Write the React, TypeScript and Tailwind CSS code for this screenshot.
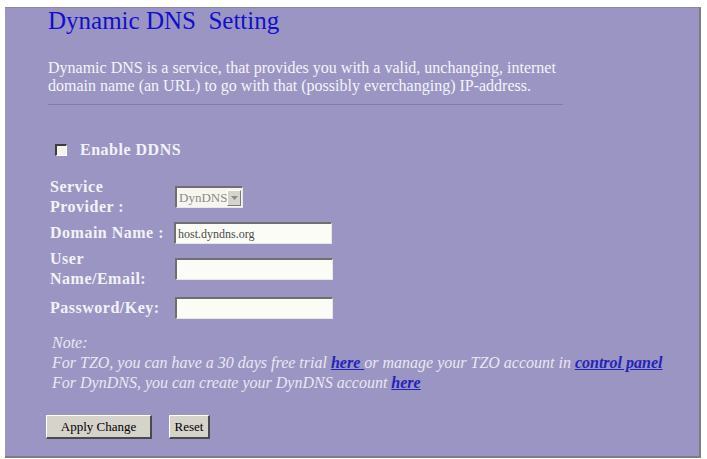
import React from "react";

function TextBox({ value }: { value?: string }) {
  return (
    <div className="w-[158px] h-[22px] bg-[#fcfcf6] border-t-2 border-l-2 border-t-[#6f6f6f] border-l-[#6f6f6f] border-b border-r border-b-[#e8e8e0] border-r-[#e8e8e0] flex items-center pl-[2px] text-[12px] font-normal tracking-normal text-[#4a4a4a] leading-none">
      {value}
    </div>
  );
}

export default function App() {
  return (
    <div className="w-[707px] h-[459px] bg-white overflow-hidden font-['Liberation_Serif','Times_New_Roman',serif]">
      <div className="ml-[5px] mt-[7px] w-[696px] h-[451px] bg-[#9b95c3] border-t border-t-[#8a8a9a] border-r-2 border-b-2 border-r-[#7c7c84] border-b-[#7c7c84]">
        <div className="pl-[43px]">
          <h1 className="text-[25px] leading-[25px] text-[#1010cc] whitespace-pre">Dynamic DNS  Setting</h1>
          <p className="mt-[26px] text-[16px] leading-[18px] text-[#f4f4f8]">
            Dynamic DNS is a service, that provides you with a valid, unchanging, internet
            <br />
            domain name (an URL) to go with that (possibly everchanging) IP-address.
          </p>
          <div className="mt-[9px] w-[515px] border-t border-[#827cab]" />
        </div>

        <div className="pl-[50px] mt-[35px] flex items-center h-[20px]">
          <div className="w-[12px] h-[12px] bg-[#f4f4ec] border-t-2 border-l-2 border-t-[#3c3c3c] border-l-[#3c3c3c] border-b border-r border-b-white border-r-white" />
          <span className="ml-[13px] text-[16px] leading-[20px] font-bold tracking-[0.5px] text-[#f2f2f6]">Enable DDNS</span>
        </div>

        <div className="pl-[45px] mt-[17px] flex flex-col text-[16px] leading-[20px] font-bold tracking-[0.5px] text-[#f2f2f6]">
          <div className="flex items-center h-[40px]">
            <div className="w-[125px]">
              Service
              <br />
              Provider :
            </div>
            <div className="w-[68px] h-[22px] bg-[#f6f6ef] border-t-2 border-l-2 border-t-[#6f6f6f] border-l-[#6f6f6f] border-b border-r border-b-[#e8e8e0] border-r-[#e8e8e0] flex items-center justify-between">
              <span className="pl-[2px] text-[13px] font-normal tracking-normal text-[#8a8a8a] leading-none">DynDNS</span>
              <span className="w-[15px] h-[16px] mr-[1px] bg-[#d6d3cc] border-t border-l border-t-white border-l-white border-b border-r border-b-[#7a7a7a] border-r-[#7a7a7a] flex items-center justify-center">
                <svg width="7" height="4" viewBox="0 0 7 4">
                  <path d="M0 0 L7 0 L3.5 4 Z" fill="#8a8a8a" />
                </svg>
              </span>
            </div>
          </div>
          <div className="flex items-center h-[22px] mt-[5px]">
            <div className="w-[124px]">Domain Name :</div>
            <TextBox value="host.dyndns.org" />
          </div>
          <div className="flex items-center h-[40px] mt-[5px]">
            <div className="w-[125px]">
              User
              <br />
              Name/Email:
            </div>
            <TextBox />
          </div>
          <div className="flex items-center h-[22px] mt-[8px]">
            <div className="w-[125px]">Password/Key:</div>
            <TextBox />
          </div>
        </div>

        <div className="pl-[47px] mt-[14px] text-[16px] leading-[20px] italic text-[#e8e8f2]">
          <div>Note:</div>
          <div>
            For TZO, you can have a 30 days free trial{" "}
            <a className="font-bold underline text-[#2424b8]">here </a>
            or manage your TZO account in{" "}
            <a className="font-bold underline text-[#2424b8]">control panel</a>
          </div>
          <div>
            For DynDNS, you can create your DynDNS account{" "}
            <a className="font-bold underline text-[#2424b8]">here</a>
          </div>
        </div>

        <div className="pl-[41px] mt-[22px] flex items-center gap-[17px]">
          <button className="w-[106px] h-[24px] bg-[#d6d3cb] border-t border-l border-t-white border-l-white border-b-2 border-r-2 border-b-[#4a4a4a] border-r-[#4a4a4a] text-[13px] text-black leading-none">
            Apply Change
          </button>
          <button className="w-[41px] h-[24px] bg-[#d6d3cb] border-t border-l border-t-white border-l-white border-b-2 border-r-2 border-b-[#4a4a4a] border-r-[#4a4a4a] text-[13px] text-black leading-none">
            Reset
          </button>
        </div>
      </div>
    </div>
  );
}
